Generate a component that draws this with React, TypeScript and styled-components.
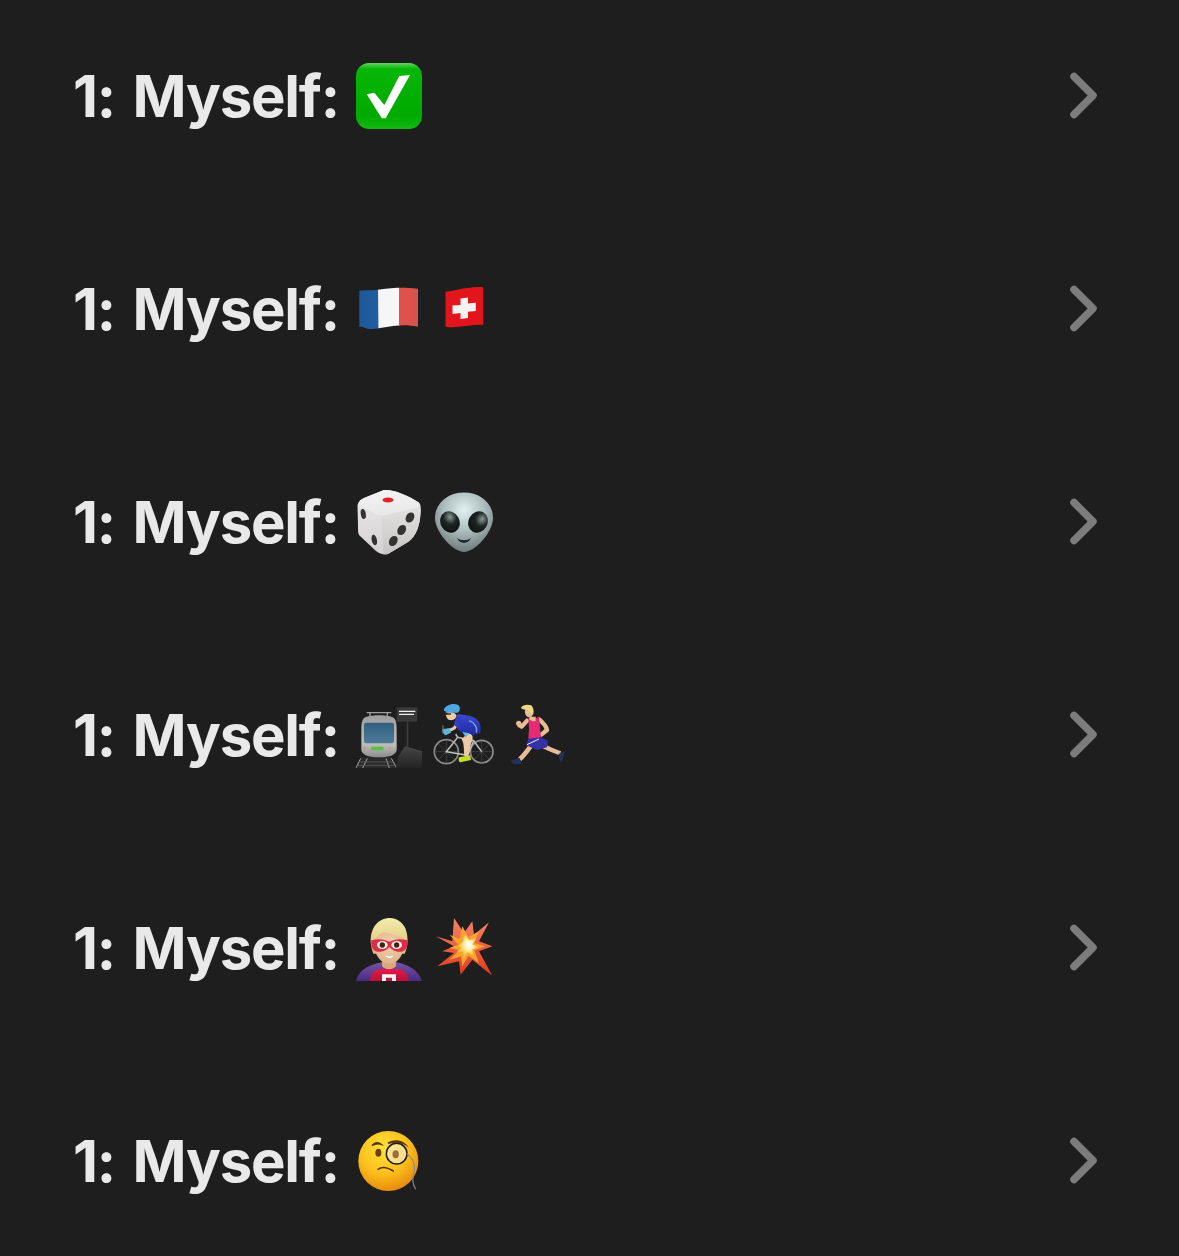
import React from "react";
import styled, { createGlobalStyle } from "styled-components";

const Global = createGlobalStyle`
  html, body { margin: 0; height: 1256px; overflow: hidden; background: #1f1e1e; }
`;
const Page = styled.main`
  height: 1256px; overflow: hidden; background: #1f1e1e;
  font-family: Inter, "Liberation Sans", sans-serif;
`;
const List = styled.ul`
  list-style: none; margin: -11px 0 0; padding: 0;
`;
const Row = styled.li`
  height: 213px; display: flex; align-items: center;
  padding: 0 81px 0 73px; box-sizing: border-box;
`;
const Label = styled.span`
  font-size: 58px; font-weight: 700; color: #e9e9e9; letter-spacing: -1.2px; word-spacing: 5px;
  white-space: nowrap; margin-right: 18px; width: 265px;
`;
const Emojis = styled.span`display: flex; gap: 8.5px;`;
const Slot = styled.svg`width: 66px; height: 66px; display: block; flex: none;`;
const ChevronIcon = styled.svg`
  width: 30px; height: 48px; margin-left: auto; flex: none;
  fill: none; stroke: #7c7c7c; stroke-width: 7.5; stroke-linecap: round; stroke-linejoin: round;
`;

const Grad = ({ id, stops, x2 = 0, y2 = 1 }: { id: string; stops: [number, string][]; x2?: number; y2?: number }) => (
  <linearGradient id={id} x1="0" y1="0" x2={x2} y2={y2}>
    {stops.map(([o, c]) => <stop key={o} offset={o} stopColor={c} />)}
  </linearGradient>
);
const Rad = ({ id, stops, cx = 0.5, cy = 0.5, r = 0.5 }: { id: string; stops: [number, string][]; cx?: number; cy?: number; r?: number }) => (
  <radialGradient id={id} cx={cx} cy={cy} r={r}>
    {stops.map(([o, c]) => <stop key={o} offset={o} stopColor={c} />)}
  </radialGradient>
);

const Z = "6 6 198 198";

const Check = () => (
  <Slot viewBox="0 0 66 66">
    <defs><Grad id="chk" stops={[[0, "#62d462"], [0.09, "#06b606"], [0.8, "#00aa00"], [1, "#12ba12"]]} /></defs>
    <rect x="0" y="0" width="66" height="66" rx="13" fill="url(#chk)" />
    <path d="M54 12 43.3 13 28.3 42 18.3 29.7 10.7 31.3 25.7 55.3 29.7 55.3Z" fill="#fff" />
  </Slot>
);

const France = () => (
  <Slot viewBox="0 0 66 66">
    <defs>
      <clipPath id="fr"><path d="M3.3 14.7C12 14 18 14.5 24 13.5S42 10.5 62 12.7V50.7C50 48 40 49 24 52S10 50 3.3 50.7Z" /></clipPath>
      <Grad id="frB" stops={[[0, "#1c5798"], [1, "#245fa2"]]} x2={1} y2={0} />
      <Grad id="frR" stops={[[0, "#e2514c"], [1, "#d8524c"]]} x2={1} y2={0} />
    </defs>
    <g clipPath="url(#fr)">
      <rect x="3" y="8" width="20" height="50" fill="url(#frB)" />
      <path d="M22 8H43L44 58H22.5Z" fill="#f6f6f6" />
      <rect x="43" y="8" width="20" height="50" fill="url(#frR)" />
    </g>
  </Slot>
);
const Swiss = () => (
  <Slot viewBox="0 0 66 66">
    <path d="M14.5 15.7C24 15 38 10 52 11.3V49C40 48 26 53 14.5 50.7Z" fill="#e3151c" />
    <path d="M29.5 22.5 37 21.5V27.5L44.8 26.8V35L37 35.8V42L29.5 43V37L21.5 38V29.5L29.5 29Z" fill="#f6f2f2" />
  </Slot>
);
const Die = () => (
  <Slot viewBox="0 0 66 66">
    <defs>
      <Grad id="dT" stops={[[0, "#f4f3f3"], [1, "#e9e8e8"]]} />
      <Grad id="dL" stops={[[0, "#ebe9e9"], [1, "#d4d2d2"]]} />
      <Grad id="dR" stops={[[0, "#e3e2e0"], [1, "#c6c4c4"]]} />
    </defs>
    <path d="M28 1C36 0 52 6 62 13 65 15 65 18 64.5 24 64 36 60 48 52 53L32 65C28 66 24 65 20 62L4 47C2 45 2 43 2 36L1.5 17C2 13 4 11 8 9Z" fill="url(#dL)" />
    <path d="M28 1C36 0 52 6 62 13 65 15 63 17 60 19L30 26C26 27 23 26 20 25L4 17C2 15 3 11 8 9Z" fill="url(#dT)" />
    <path d="M60 19C64 17 65 19 64.5 24 64 36 60 48 52 53L32 65C28 66 27 63 27 58L26 30C26 28 26 27 30 26Z" fill="url(#dR)" />
    <ellipse cx="32" cy="11" rx="5.5" ry="2.4" fill="#e5202a" />
    <ellipse cx="7.3" cy="25" rx="2.5" ry="5" fill="#333" transform="rotate(-10 7.3 25)" />
    <ellipse cx="18.3" cy="51" rx="2.6" ry="5.4" fill="#333" transform="rotate(-12 18.3 51)" />
    <ellipse cx="54" cy="28.5" rx="4" ry="5.4" fill="#333" transform="rotate(30 54 28.5)" />
    <ellipse cx="45.7" cy="41" rx="4" ry="5.4" fill="#333" transform="rotate(30 45.7 41)" />
    <ellipse cx="37.3" cy="52" rx="4" ry="5.4" fill="#333" transform="rotate(30 37.3 52)" />
  </Slot>
);
const Alien = () => (
  <Slot viewBox="0 0 66 66">
    <defs>
      <Rad id="alH" cx={0.5} cy={0.3} r={0.68} stops={[[0, "#e0f1f1"], [0.55, "#a9b9b9"], [1, "#6f7f7f"]]} />
      <Rad id="alE" cx={0.62} cy={0.3} r={0.75} stops={[[0, "#8a9999"], [0.45, "#1d2424"], [1, "#0d1111"]]} />
    </defs>
    <path d="M33 3.5C50 3.5 62 15 62 29 62 43 44 63 33 63 22 63 4 43 4 29 4 15 16 3.5 33 3.5Z" fill="url(#alH)" />
    <ellipse cx="19" cy="33" rx="9.5" ry="11" fill="url(#alE)" transform="rotate(-28 19 33)" />
    <ellipse cx="47" cy="33" rx="9.5" ry="11" fill="url(#alE)" transform="rotate(28 47 33)" />
    <path d="M26 49C30 52 36 52 40 49 37 55.5 29 55.5 26 49Z" fill="#1f2a2a" />
  </Slot>
);
const Train = () => (
  <Slot viewBox={Z}>
    <defs>
      <Grad id="trB" stops={[[0, "#9e9e9e"], [0.7, "#bdbdbd"], [1, "#8c8c8c"]]} />
      <Grad id="trW" stops={[[0, "#2f5e80"], [1, "#4f7c98"]]} />
      <Grad id="trP" stops={[[0, "#444"], [1, "#232323"]]} />
    </defs>
    <path d="M10 204 20 172H112L136 204Z" fill="#2a2a2a" />
    <path d="M20 175 6 204M40 175 26 204M96 175 106 204M112 175 128 204" stroke="#a5a5a5" strokeWidth="3" fill="none" />
    <path d="M16 186H118M12 196H124" stroke="#555" strokeWidth="3" />
    <path d="M126 204 132 170 152 140 204 155V204Z" fill="url(#trP)" />
    <path d="M152 140 204 155" stroke="#5a5a5a" strokeWidth="2" />
    <rect x="158" y="64" width="5" height="82" fill="#3d3d3d" />
    <rect x="128" y="22" width="62" height="43" fill="#3a3a3a" />
    <path d="M135 34H184M135 43H180" stroke="#f0f0f0" strokeWidth="3.5" />
    <path d="M38 38H112M48 38V52M100 38V52" stroke="#9f9f9f" strokeWidth="4" fill="none" />
    <circle cx="60" cy="56" r="3" fill="#8e5a5a" />
    <circle cx="80" cy="56" r="3" fill="#8e5a5a" />
    <path d="M38 50C58 44 94 44 112 50 124 54 128 62 128 90L128 150C126 164 110 172 75 172 40 172 24 164 22 150L22 90C22 62 26 54 38 50Z" fill="url(#trB)" />
    <rect x="30" y="68" width="90" height="62" rx="7" fill="url(#trW)" />
    <rect x="52" y="140" width="36" height="11" rx="2" fill="#55c23e" />
    <circle cx="33" cy="144" r="4.5" fill="#c99a70" />
    <circle cx="108" cy="144" r="4.5" fill="#c99a70" />
  </Slot>
);
const Cyclist = () => (
  <Slot viewBox={Z}>
    <defs><Grad id="cyB" stops={[[0, "#3a49cf"], [1, "#1f2a9e"]]} /></defs>
    <g fill="none">
      <circle cx="52" cy="155" r="36" stroke="#8c8c8c" strokeWidth="5" />
      <circle cx="158" cy="155" r="34" stroke="#8c8c8c" strokeWidth="5" />
      <path d="M52 122V188M19 155H85M28 131 76 179M76 131 28 179M158 122V188M125 155H191M134 131 182 179M182 131 134 179" stroke="#6e6e6e" strokeWidth="1.2" />
      <path d="M52 155 86 112 134 122 116 166ZM134 122 158 155M86 112 80 102" stroke="#bdbdbd" strokeWidth="4.5" />
    </g>
    <path d="M116 100C134 102 134 114 126 132 122 146 120 158 118 170L106 168C104 152 106 130 98 118Z" fill="#edc9a6" />
    <path d="M90 172 124 166 126 180 94 187C88 186 88 178 90 172Z" fill="#c7df2c" />
    <path d="M86 42 125 48C146 54 160 70 154 98L132 106C124 98 110 100 100 98 86 90 76 80 76 66Z" fill="url(#cyB)" />
    <path d="M120 62C138 68 146 84 142 98" stroke="#7fa2ea" strokeWidth="4" fill="none" />
    <path d="M100 96 122 100 110 112Z" fill="#67b8dc" />
    <path d="M92 58 76 84 60 92" stroke="#edc9a6" strokeWidth="9" fill="none" />
    <path d="M88 52 76 76 86 84 100 60Z" fill="#2f3cc0" />
    <path d="M40 88 62 84 66 98 50 106C44 104 40 96 40 88Z" fill="#5bb6dc" />
    <path d="M42 76 42 100" stroke="#808080" strokeWidth="3" />
    <path d="M50 38C60 34 78 36 82 46 82 56 74 62 62 60 54 58 50 48 50 38Z" fill="#edc9a6" />
    <path d="M46 44 60 42 52 38" fill="#222" />
    <path d="M44 30C48 16 70 8 86 14 96 20 94 32 86 38L62 38C54 36 48 36 44 30Z" fill="#4da8e0" />
    <path d="M50 42 66 42" stroke="#222" strokeWidth="4" />
  </Slot>
);
const Runner = () => (
  <Slot viewBox={Z}>
    <path d="M76 58 56 80 46 74" fill="none" stroke="#e8bd96" strokeWidth="13" strokeLinejoin="round" />
    <circle cx="47" cy="70" r="8" fill="#e8bd96" />
    <path d="M106 56C118 66 130 78 132 90L112 106" fill="none" stroke="#e8bd96" strokeWidth="13" strokeLinejoin="round" />
    <path d="M84 138C74 150 64 166 50 178" fill="none" stroke="#e8bd96" strokeWidth="14" />
    <path d="M118 136C134 146 152 152 172 160" fill="none" stroke="#e8bd96" strokeWidth="13" />
    <path d="M76 54 94 58 108 50 114 114 76 118 78 86Z" fill="#e62a76" />
    <path d="M76 116 114 112 135 122 132 142 102 150 70 136Z" fill="#3532a8" />
    <path d="M72 134 108 117" stroke="#e8eefb" strokeWidth="3" />
    <path d="M22 182 50 174 56 192 32 192Z" fill="#22325c" />
    <path d="M166 162 186 154 176 188 170 180Z" fill="#22325c" />
    <path d="M66 28C64 44 70 54 84 52 92 44 92 30 84 24Z" fill="#e8bd96" />
    <path d="M82 50H98V62C90 66 82 62 78 56Z" fill="#e8bd96" />
    <path d="M54 24C58 14 74 12 84 16 92 22 94 36 90 44L80 36 72 28C66 30 58 28 54 24Z" fill="#ecd884" />
  </Slot>
);
const Hero = () => (
  <Slot viewBox={Z}>
    <defs>
      <Grad id="hC" stops={[[0, "#7554a8"], [1, "#4a2a7c"]]} />
      <Grad id="hS" stops={[[0, "#e81648"], [1, "#b8103a"]]} />
      <Rad id="hF" cy={0.4} r={0.62} stops={[[0, "#f3d3af"], [1, "#dfb289"]]} />
      <Grad id="hH" stops={[[0, "#f5ebab"], [1, "#d9c176"]]} />
      <clipPath id="hClip"><rect x="6" y="6" width="198" height="198" /></clipPath>
    </defs>
    <g clipPath="url(#hClip)">
      <path d="M6 204C12 180 32 158 82 148H128C172 156 196 180 204 204Z" fill="url(#hC)" />
      <path d="M48 204C50 182 58 172 80 168H130C152 172 162 182 164 204Z" fill="url(#hS)" />
      <path d="M84 204V184H126V204H114V194H96V204Z" fill="#f8f2f2" />
      <path d="M84 134H126V160C116 172 94 172 84 160Z" fill="#d8a77c" />
      <path d="M58 122C46 90 48 64 60 42 72 22 92 15 108 15 128 15 146 28 154 46 164 72 162 100 152 122Z" fill="url(#hH)" />
      <path d="M60 84C68 70 78 62 92 56 110 62 134 66 150 78 156 112 138 152 106 152 76 152 58 118 60 84Z" fill="url(#hF)" />
      <path d="M52 82C70 76 90 78 106 86 122 78 142 76 160 82 162 100 156 114 142 116 124 118 114 110 106 102 98 110 88 118 70 116 56 114 50 100 52 82Z" fill="#dc2c48" />
      <ellipse cx="85" cy="96" rx="16" ry="12" fill="#f8efe4" />
      <ellipse cx="128" cy="96" rx="16" ry="12" fill="#f8efe4" />
      <circle cx="85" cy="96" r="8" fill="#3c2610" />
      <circle cx="128" cy="96" r="8" fill="#3c2610" />
      <path d="M94 127C100 131 112 131 118 127 115 138 97 138 94 127Z" fill="#fff" />
    </g>
  </Slot>
);
const Explosion = () => (
  <Slot viewBox={Z}>
    <defs>
      <Rad id="exC" cx={0.56} cy={0.45} r={0.42} stops={[[0, "#ffffff"], [0.4, "#fff5c0"], [1, "#f9c23a"]]} />
      <Grad id="exO" stops={[[0, "#f58568"], [1, "#e23a1c"]]} y2={1} />
    </defs>
    <path d="M20 70 70 85 75 15 105 60 130 25 135 65 180 28 150 85 190 100 150 115 190 188 130 140 95 185 90 145 25 160 75 120 40 115 75 100Z" fill="url(#exO)" />
    <path d="M62 65 92 78 100 40 118 72 150 55 136 90 168 100 136 112 150 150 118 128 100 160 96 130 62 140 90 112 62 104 88 95Z" fill="#f5a42c" />
    <path d="M88 98 100 88 108 62 120 82 142 76 130 94 148 102 130 110 134 130 116 118 104 136 102 116 82 118 96 106Z" fill="url(#exC)" />
  </Slot>
);
const Monocle = () => (
  <Slot viewBox={Z}>
    <defs>
      <Rad id="moF" cx={0.42} cy={0.3} r={0.72} stops={[[0, "#ffe23a"], [0.55, "#fcc21c"], [1, "#e8890e"]]} />
    </defs>
    <circle cx="103" cy="105" r="90" fill="url(#moF)" />
    <ellipse cx="73" cy="80" rx="9" ry="12" fill="#6e4210" />
    <path d="M52 58C60 46 76 42 90 60 78 54 66 54 55 60Z" fill="#5a3208" />
    <path d="M100 50C116 38 150 38 165 66 150 50 125 46 104 54Z" fill="#5a3208" />
    <circle cx="128" cy="83" r="31" fill="#f9e6ba" fillOpacity="0.72" stroke="#1d1d1d" strokeWidth="4.5" />
    <ellipse cx="125" cy="85" rx="9.5" ry="12" fill="#8a5a2a" fillOpacity="0.85" />
    <path d="M72 130C82 122 100 124 118 135" stroke="#5a3208" strokeWidth="4.5" fill="none" strokeLinecap="round" />
    <path d="M158 82C180 100 186 122 178 146 174 162 178 178 185 190" stroke="#8a8a8a" strokeWidth="3.4" fill="none" />
  </Slot>
);

const Chevron = () => (
  <ChevronIcon viewBox="0 0 30 48" aria-hidden="true">
    <polyline points="6,4.5 25,23.5 6,42.5" />
  </ChevronIcon>
);

const rows: React.ReactNode[][] = [
  [<Check key="c" />],
  [<France key="f" />, <Swiss key="s" />],
  [<Die key="d" />, <Alien key="a" />],
  [<Train key="t" />, <Cyclist key="c" />, <Runner key="r" />],
  [<Hero key="h" />, <Explosion key="e" />],
  [<Monocle key="m" />],
];

export default function App() {
  return (
    <Page>
      <Global />
      <List>
        {rows.map((emojis, i) => (
          <Row key={i}>
            <Label>1: Myself:</Label>
            <Emojis>{emojis}</Emojis>
            <Chevron />
          </Row>
        ))}
      </List>
    </Page>
  );
}
